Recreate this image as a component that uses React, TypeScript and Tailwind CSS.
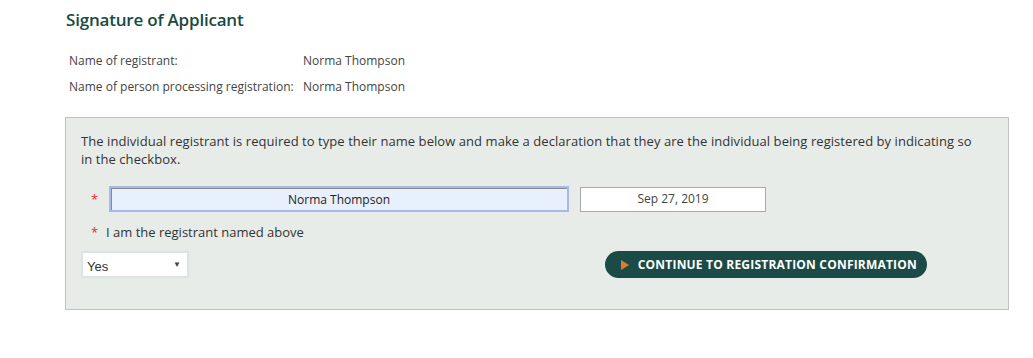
import { useState } from 'react';

export default function App() {
  const [name, setName] = useState('Norma Thompson');
  const [answer, setAnswer] = useState('Yes');

  return (
    <div className="w-[1033px] h-[358px] bg-white font-['Open_Sans',sans-serif] text-[#3c3c3c]">
      <div className="pl-[66px] pt-[8px]">
        <h2 className="text-[17px] font-semibold text-[#174a43] leading-[24px] tracking-[-0.2px]">Signature of Applicant</h2>

        <div className="mt-[16px] ml-[3px] text-[12px] leading-[26px] text-[#444]">
          <div className="flex">
            <span className="w-[234px]">Name of registrant:</span>
            <span>Norma Thompson</span>
          </div>
          <div className="flex">
            <span className="w-[234px]">Name of person processing registration:</span>
            <span>Norma Thompson</span>
          </div>
        </div>
      </div>

      <div className="ml-[65px] mt-[17px] w-[944px] h-[193px] bg-[#e8ece9] border border-[#c2c2c2] px-[15px] pt-[14px]">
        <p className="text-[13px] leading-[18px] text-[#333] pr-[20px] tracking-[0.06px]">
          The individual registrant is required to type their name below and make a declaration that they are the individual being registered by indicating so in the checkbox.
        </p>

        <div className="flex items-center mt-[18px]">
          <span className="w-[28px] pl-[10px] text-[#e8283a] text-[13px] leading-none">*</span>
          <input
            value={name}
            onChange={(e) => setName(e.target.value)}
            className="w-[460px] h-[26px] bg-[#e8f0fe] border-2 border-[#a6b9ea] shadow-[inset_1px_1px_0_#8a8a8a] text-center text-[12px] text-[#222] outline-none"
          />
          <div className="ml-[11px] w-[186px] h-[25px] bg-white border border-[#a9a9a9] flex items-center justify-center text-[12px] text-[#444]">
            Sep 27, 2019
          </div>
        </div>

        <div className="flex items-center mt-[11px] text-[13px] leading-[18px] text-[#333]">
          <span className="w-[25px] pl-[10px] text-[#e8283a]">*</span>
          <span>I am the registrant named above</span>
        </div>

        <div className="flex items-center justify-between mt-[10px] pr-[66px]">
          <div className="relative w-[108px] h-[27px] bg-white border-2 border-[#dce3e4]">
            <select
              value={answer}
              onChange={(e) => setAnswer(e.target.value)}
              className="appearance-none w-full h-full pl-[4px] text-[13px] font-['Liberation_Sans',Arial,sans-serif] text-[#333] bg-transparent outline-none"
            >
              <option>Yes</option>
              <option>No</option>
            </select>
            <span className="absolute right-[6px] top-[5px] text-[8px] text-[#444] pointer-events-none">▼</span>
          </div>

          <button className="h-[27px] pl-[16px] pr-[10px] rounded-full bg-[#1b4b47] text-white text-[12px] font-bold flex items-center gap-[9px] uppercase tracking-[0.2px]">
            <svg width="8" height="10" viewBox="0 0 8 10"><path d="M0 0 L8 5 L0 10 Z" fill="#e07b2d" /></svg>
            Continue to Registration Confirmation
          </button>
        </div>
      </div>
    </div>
  );
}
